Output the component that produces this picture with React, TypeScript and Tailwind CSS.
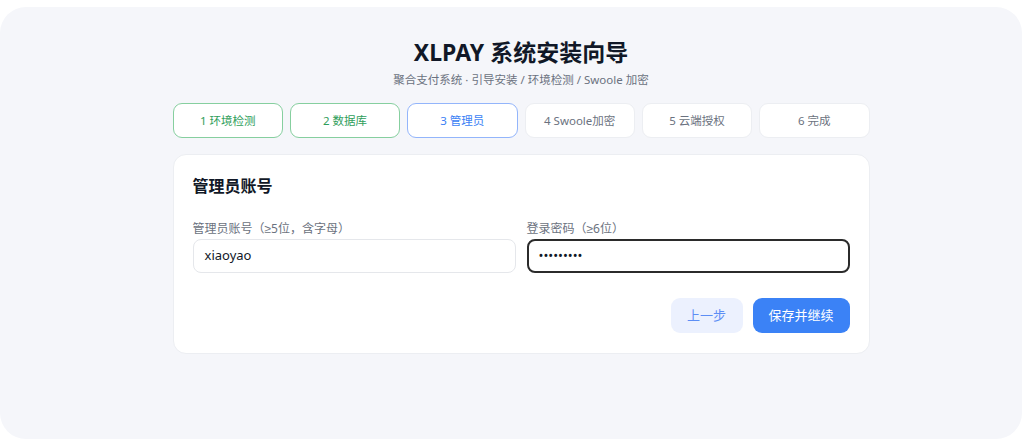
import React from "react";

const steps = [
  { label: "1 环境检测", state: "done" },
  { label: "2 数据库", state: "done" },
  { label: "3 管理员", state: "active" },
  { label: "4 Swoole加密", state: "todo" },
  { label: "5 云端授权", state: "todo" },
  { label: "6 完成", state: "todo" },
];

const ge = <span style={{ fontFamily: '"Liberation Sans", sans-serif' }}>≥</span>;

export default function App() {
  const font = { fontFamily: '"Noto Sans", "Noto Sans CJK SC", sans-serif' };
  return (
    <div className="w-[1024px] h-[439px] bg-white pt-[7px] pr-[2px]" style={font}>
      <div className="h-[432px] rounded-[26px] bg-[#f5f6fa] flex flex-col items-center pt-[30px] pl-[20px]">
        <h1 className="text-[23px] leading-[30px] font-bold text-[#111827]">XLPAY 系统安装向导</h1>
        <p className="mt-[4px] text-[11.5px] leading-[18px] text-[#6b7280]">聚合支付系统 · 引导安装 / 环境检测 / Swoole 加密</p>
        <div className="mt-[14px] w-[697px] grid grid-cols-6 gap-[7px]">
          {steps.map((s) => (
            <div
              key={s.label}
              className={
                "h-[35px] rounded-[9px] border flex items-center justify-center text-[11.5px] " +
                (s.state === "done"
                  ? "bg-white border-[#86cf9f] text-[#2f9e5b]"
                  : s.state === "active"
                  ? "bg-white border-[#93b5fb] text-[#3b7ff5]"
                  : "bg-white border-[#eceef2] text-[#6b7280]")
              }
            >
              {s.label}
            </div>
          ))}
        </div>
        <div className="mt-[16px] w-[697px] bg-white rounded-[13px] border border-[#eceef2] px-[19px] pt-[20px] pb-[20px]">
          <h2 className="text-[16px] leading-[22px] font-bold text-[#111827]">管理员账号</h2>
          <div className="mt-[24px] grid grid-cols-2 gap-[11px]">
            <div>
              <div className="text-[12px] leading-[16px] text-[#6b7280]">管理员账号（{ge}5位，含字母）</div>
              <div className="mt-[2px] h-[34px] rounded-[8px] border border-[#e5e7eb] flex items-center px-[11px] text-[13px] text-[#111827]">
                xiaoyao
              </div>
            </div>
            <div>
              <div className="text-[12px] leading-[16px] text-[#6b7280]">登录密码（{ge}6位）</div>
              <div className="mt-[2px] h-[34px] rounded-[8px] border-2 border-[#2b2b2b] flex items-center px-[10px] text-[#111827]">
                <span className="text-[13px]">•••••••••</span>
              </div>
            </div>
          </div>
          <div className="mt-[25px] flex justify-end gap-[10px]">
            <button className="h-[35px] w-[72px] rounded-[9px] bg-[#ecf1fe] text-[#5d8ef5] text-[13px]">上一步</button>
            <button className="h-[35px] w-[97px] rounded-[9px] bg-[#3b82f6] text-white text-[13px]">保存并继续</button>
          </div>
        </div>
      </div>
    </div>
  );
}
